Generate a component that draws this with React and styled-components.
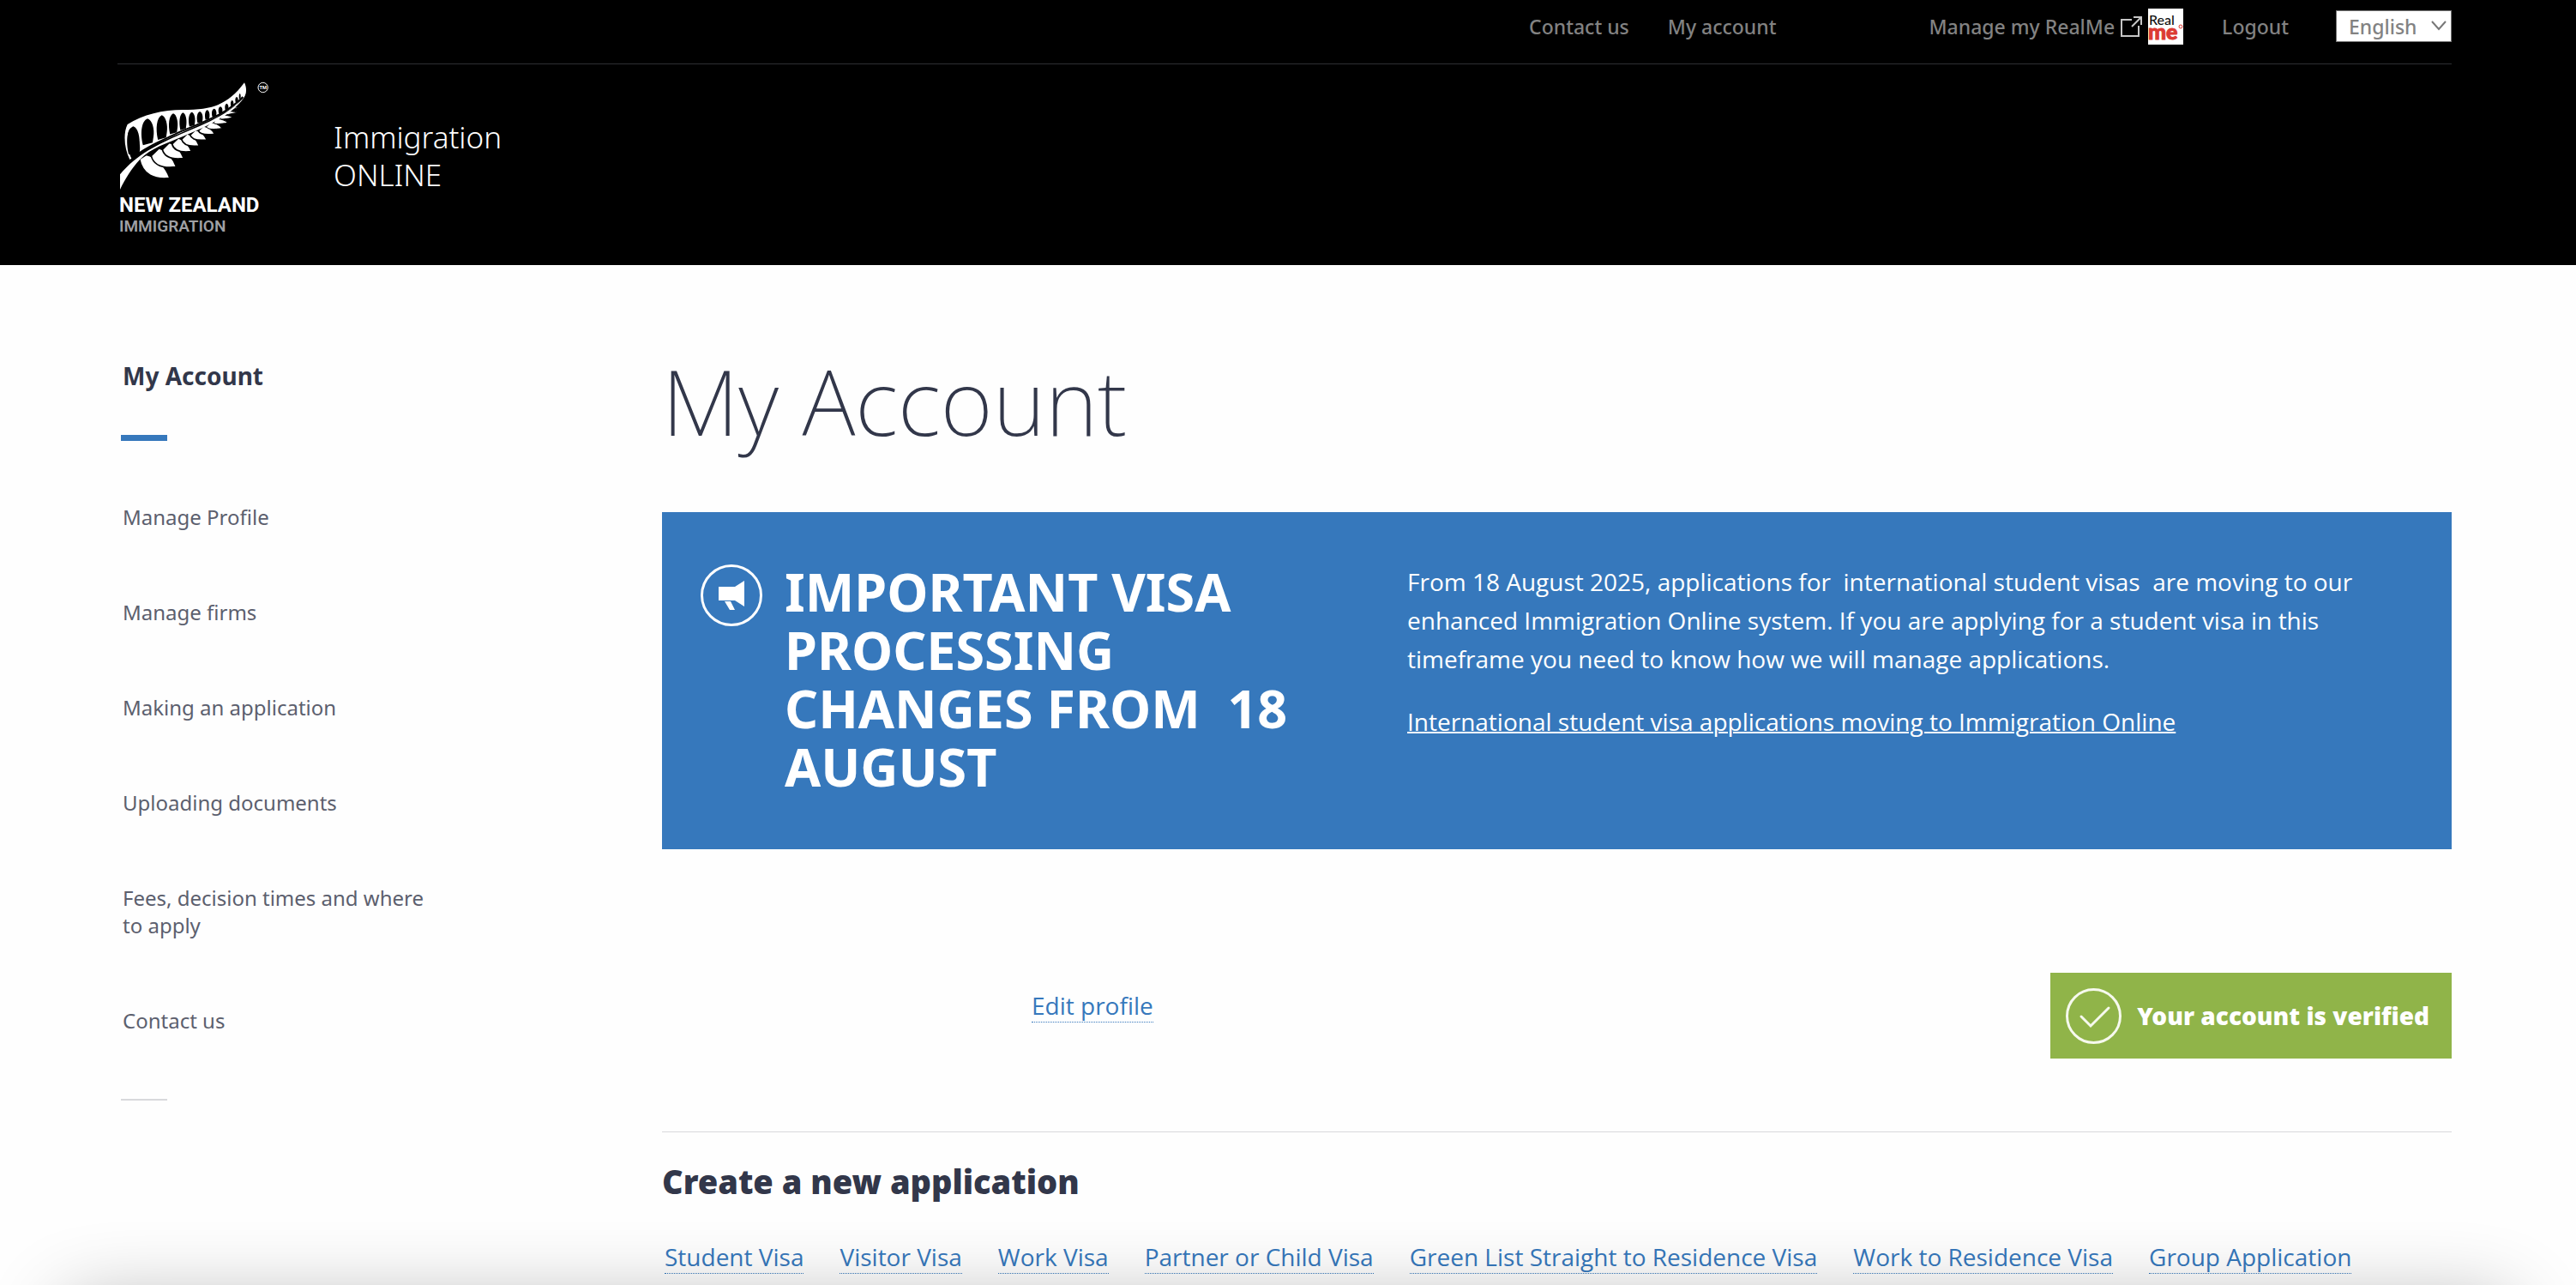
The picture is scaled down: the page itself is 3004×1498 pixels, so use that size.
import React from 'react';
import styled, { createGlobalStyle } from 'styled-components';

const sans = '"Noto Sans", "Open Sans", sans-serif';
const body = '"Open Sans", "Noto Sans", sans-serif';

const color = {
  ink: '#32374a',
  muted: '#5c606e',
  blue: '#3678bc',
  green: '#90b449',
  rule: '#d8d9dc',
  nav: '#828282',
};

const GlobalStyle = createGlobalStyle`
  *, *::before, *::after { box-sizing: border-box; }
  body {
    margin: 0;
    background: #fefefe;
    color: ${color.ink};
    font-family: ${body};
    overflow-x: hidden;
  }
  h1, h2, p, ul { margin: 0; padding: 0; }
  ul { list-style: none; }
`;

const Header = styled.header`
  background: #000;
  padding: 0 145px 32px 137px;
`;

const TopBar = styled.div`
  display: flex;
  justify-content: flex-end;
  align-items: center;
  height: 75px;
  padding-bottom: 13px;
  border-bottom: 1px solid #2e2f33;
`;

const NavGroup = styled.nav`
  display: flex;
  align-items: center;
  gap: 45px;
  margin-right: ${(p) => p.$after}px;
`;

const NavLink = styled.a`
  display: flex;
  align-items: center;
  font: 500 23px/30px ${sans};
  color: ${color.nav};
  text-decoration: none;
`;

const NavIcon = styled.svg`
  display: block;
  flex: none;
  margin-left: 6px;
`;

const LanguagePicker = styled.div`
  position: relative;
  width: 135px;
`;

const LanguageSelect = styled.select`
  appearance: none;
  display: block;
  width: 100%;
  height: 37px;
  padding: 0 0 0 14px;
  border: 1px solid #767676;
  border-radius: 0;
  background: #fff;
  color: ${color.nav};
  font: 500 23px/30px ${sans};
`;

const Chevron = styled.svg`
  position: absolute;
  right: 6px;
  top: 12px;
  pointer-events: none;
`;

const Brand = styled.div`
  display: flex;
  align-items: center;
  gap: 72px;
  padding-top: 12px;
`;

const HomeLink = styled.a`
  display: block;
  svg { display: block; }
`;

const BrandTitle = styled.p`
  font: 300 35px/44px ${sans};
  color: #fff;
`;

const Page = styled.div`
  display: grid;
  grid-template-columns: 370px minmax(0, 1fr);
  column-gap: 261px;
  padding: 99px 145px 12px 141px;
`;

const SideTitle = styled.h2`
  font: 700 28px/60px ${sans};
  padding-left: 2px;
`;

const Marker = styled.div`
  width: 54px;
  height: ${(p) => p.$height}px;
  background: ${(p) => p.$color};
  margin-top: ${(p) => p.$before}px;
`;

const SideList = styled.ul`
  display: flex;
  flex-direction: column;
  gap: 79px;
  margin-top: 73px;
  padding-left: 2px;
`;

const SideLink = styled.a`
  display: block;
  font: 400 24px/32px ${sans};
  color: ${color.muted};
  text-decoration: none;
`;

const Title = styled.h1`
  font: 200 105px/120px ${sans};
`;

const Notice = styled.section`
  display: grid;
  grid-template-columns: 72px minmax(0, 752fr) minmax(0, 1158fr);
  align-items: start;
  margin-top: 69px;
  padding: 59px 60px 62px 45px;
  background: ${color.blue};
  color: #fff;
`;

const NoticeIcon = styled.svg`
  display: block;
  margin-top: 2px;
`;

const NoticeTitle = styled.h2`
  margin: 0 60px 0 26px;
  font: 700 61px/68px ${sans};
  text-transform: uppercase;
`;

const NoticeText = styled.div`
  display: flex;
  flex-direction: column;
  align-items: flex-start;
  gap: 28px;
  font-size: 28px;
  line-height: 45px;
`;

const NoticeLink = styled.a`
  color: inherit;
  text-decoration-thickness: 2px;
`;

const ProfileRow = styled.div`
  display: flex;
  justify-content: space-between;
  align-items: flex-start;
  margin-top: 144px;
  padding: 0 0 85px 431px;
  border-bottom: 1px solid ${color.rule};
`;

const TextLink = styled.a`
  font-size: 28px;
  line-height: 38px;
  color: ${color.blue};
  text-decoration: none;
  white-space: nowrap;
  border-bottom: 1px dotted ${color.blue};
  margin-top: ${(p) => p.$before || 0}px;
`;

const Badge = styled.div`
  display: flex;
  align-items: center;
  gap: 18px;
  height: 100px;
  padding: 0 26px 0 18px;
  background: ${color.green};
  color: #fff;
  font: 900 28px/38px ${sans};
`;

const SectionTitle = styled.h2`
  margin: 32px 0 44px;
  font: 900 38px/50px ${sans};
`;

const VisaList = styled.ul`
  display: flex;
  flex-wrap: wrap;
  gap: 20px 42px;
  padding-left: 3px;
`;

const VisaItem = styled.li`
  display: flex;
`;

const BottomShade = styled.div`
  position: fixed;
  left: 76px;
  right: 76px;
  bottom: -220px;
  height: 200px;
  border-radius: 20px;
  box-shadow: 0 0 90px rgba(0, 0, 0, 0.3);
  pointer-events: none;
`;

const holes = [
  [76, 187, 21, 276], [126, 160, 21, 244], [176, 148, 18, 226], [216, 142, 15, 208],
  [250, 139, 12, 195], [281, 137, 11, 183], [309, 135, 10, 172], [335, 130, 8, 161],
  [359, 125, 8, 151], [381, 118, 7, 140], [403, 107, 6, 128], [422, 96, 5, 115],
  [438, 84, 5, 101], [449, 72, 3, 89],
];

const leaves = [
  [98, 302, 204, 368, 122, 286], [139, 290, 227, 329, 166, 264], [178, 268, 253, 299, 202, 244],
  [212, 249, 280, 275, 234, 228], [245, 232, 307, 255, 265, 213], [275, 217, 334, 234, 294, 199],
  [304, 202, 362, 214, 322, 186], [332, 188, 386, 194, 348, 173], [357, 174, 407, 175, 371, 160],
  [380, 160, 425, 157, 393, 147], [400, 146, 442, 139, 412, 134], [419, 131, 455, 119, 429, 120],
  [434, 117, 463, 103, 443, 106], [446, 103, 467, 88, 453, 93],
];

const holePath = ([x, t, w, b]) => {
  const h = b - t;
  return `M${x} ${t}C${x + w * 0.8} ${t + h * 0.05} ${x + w * 1.2} ${t + h * 0.45} ${x + w} ${t + h * 0.75}L${x + w * 0.85} ${b}L${x - w * 0.75} ${b + h * 0.1}C${x - w * 1.25} ${t + h * 0.6} ${x - w} ${t + h * 0.1} ${x} ${t}Z`;
};

const leafPath = ([ax, ay, tx, ty, bx, by]) => {
  const dx = tx - ax;
  const dy = ty - ay;
  return `M${ax} ${ay}C${ax + dx * 0.1} ${ay + dy * 0.6 + dx * 0.14} ${ax + dx * 0.5} ${ty + dx * 0.06} ${tx} ${ty}C${tx - dx * 0.12} ${ty - (ty - by) * 0.45} ${bx + (tx - bx) * 0.45} ${by + (ty - by) * 0.1} ${bx} ${by}Z`;
};

function FernLogo() {
  return (
    <svg width="180" height="190" viewBox="137 87 180 190" role="img" aria-label="New Zealand Immigration">
      <g transform="translate(130 85) scale(.33333)">
        <path
          fill="#fff"
          d="M64 303C45 265 40 212 56 180C110 145 180 129 250 129C350 128 405 115 465 34C476 58 472 82 456 94C430 120 390 142 350 162L160 246L98 278C104 250 92 215 78 190C66 190 55 200 56 235C57 262 62 285 70 299Z"
        />
        {holes.map((h) => <path key={h[0]} d={holePath(h)} fill="#000" />)}
        <path d="M74 298C120 258 180 236 240 206C320 172 400 146 460 84" fill="none" stroke="#000" strokeWidth="6" />
        {leaves.map((l) => (
          <path key={l[0]} d={leafPath(l)} fill="#fff" stroke="#000" strokeWidth={l[2] < 370 ? 5 : 3} />
        ))}
        <path
          fill="#fff"
          d="M30 408V355C90 282 165 250 240 215C320 181 400 152 464 86C410 158 330 186 250 222C190 248 140 262 100 302C70 334 48 370 30 408Z"
        />
        <circle cx="530" cy="51" r="17" fill="none" stroke="#fff" strokeWidth="3" />
        <text x="530" y="57" textAnchor="middle" fill="#fff" fontFamily="Roboto, sans-serif" fontSize="17" fontWeight="700">TM</text>
      </g>
      <text x="139" y="247" fill="#fff" fontFamily="Roboto, sans-serif" fontSize="24" fontWeight="700">NEW ZEALAND</text>
      <text x="139" y="270" fill="#9fa0a4" fontFamily="Roboto, sans-serif" fontSize="19" fontWeight="600">IMMIGRATION</text>
    </svg>
  );
}

function ExternalIcon() {
  return (
    <NavIcon width="27" height="26" viewBox="0 0 27 26" fill="none" stroke="#c6c6c6" strokeWidth="2" aria-hidden="true">
      <path d="M14 5H2v19h20V12M14 13L25 2M16 2h9v9" />
    </NavIcon>
  );
}

function RealMeLogo() {
  return (
    <NavIcon width="41" height="42" viewBox="0 0 41 42" role="img" aria-label="RealMe">
      <rect width="41" height="42" fill="#fff" />
      <text x="1" y="19" fill="#111" fontFamily="'Liberation Sans Narrow', Lato, sans-serif" fontSize="16">Real</text>
      <text x="0" y="36" fill="#dc3a33" stroke="#dc3a33" strokeWidth="1" fontFamily="Lato, sans-serif" fontSize="25" fontWeight="900">me</text>
      <circle cx="38" cy="21" r="2" fill="none" stroke="#dc3a33" />
    </NavIcon>
  );
}

function Megaphone() {
  return (
    <NoticeIcon width="72" height="72" viewBox="0 0 72 72" aria-hidden="true">
      <circle cx="36" cy="36" r="34.5" fill="none" stroke="#fff" strokeWidth="3" />
      <path fill="#fff" d="M21 26h19l11-7v30l-11-7H21zM28 43h7l5 10h-6z" />
    </NoticeIcon>
  );
}

function VerifiedIcon() {
  return (
    <svg width="65" height="65" viewBox="0 0 65 65" fill="none" stroke="#f6f9ee" strokeWidth="3" aria-hidden="true">
      <circle cx="32.5" cy="32.5" r="31" />
      <path d="M18 33l11 11 21-21" strokeWidth="3" strokeLinecap="round" />
    </svg>
  );
}

const noticeTitle = 'Important visa processing changes from \u00a018 August';

const noticeText =
  'From 18 August 2025, applications for \u00a0international student visas \u00a0are moving to our ' +
  'enhanced Immigration Online system. If you are applying for a student visa in this timeframe ' +
  'you need to know how we will manage applications.';

const sideLinks = [
  'Manage Profile',
  'Manage firms',
  'Making an application',
  'Uploading documents',
  'Fees, decision times and where to apply',
  'Contact us',
];

const visas = [
  'Student Visa',
  'Visitor Visa',
  'Work Visa',
  'Partner or Child Visa',
  'Green List Straight to Residence Visa',
  'Work to Residence Visa',
  'Group Application',
];

export default function App() {
  return (
    <>
      <GlobalStyle />
      <Header>
        <TopBar>
          <NavGroup $after={178} aria-label="Site">
            <NavLink href="#contact">Contact us</NavLink>
            <NavLink href="#account">My account</NavLink>
          </NavGroup>
          <NavGroup $after={55} aria-label="Session">
            <NavLink href="#realme">
              Manage my RealMe
              <ExternalIcon />
              <RealMeLogo />
            </NavLink>
            <NavLink href="#logout">Logout</NavLink>
          </NavGroup>
          <LanguagePicker>
            <LanguageSelect aria-label="Language" defaultValue="English">
              <option>English</option>
            </LanguageSelect>
            <Chevron width="18" height="12" viewBox="0 0 18 12" fill="none" stroke="#777" strokeWidth="2" aria-hidden="true">
              <path d="M1 1l8 9 8-9" />
            </Chevron>
          </LanguagePicker>
        </TopBar>
        <Brand>
          <HomeLink href="#home"><FernLogo /></HomeLink>
          <BrandTitle>Immigration<br />ONLINE</BrandTitle>
        </Brand>
      </Header>

      <Page>
        <aside>
          <SideTitle>My Account</SideTitle>
          <Marker $height={7} $before={39} $color={color.blue} />
          <nav aria-label="My Account">
            <SideList>
              {sideLinks.map((label) => (
                <li key={label}><SideLink href="#section">{label}</SideLink></li>
              ))}
            </SideList>
          </nav>
          <Marker $height={2} $before={75} $color={color.rule} />
        </aside>

        <main>
          <Title>My Account</Title>
          <Notice>
            <Megaphone />
            <NoticeTitle>{noticeTitle}</NoticeTitle>
            <NoticeText>
              <p>{noticeText}</p>
              <NoticeLink href="#student-visas">
                International student visa applications moving to Immigration Online
              </NoticeLink>
            </NoticeText>
          </Notice>

          <ProfileRow>
            <TextLink href="#edit" $before={19}>Edit profile</TextLink>
            <Badge>
              <VerifiedIcon />
              Your account is verified
            </Badge>
          </ProfileRow>

          <SectionTitle>Create a new application</SectionTitle>
          <VisaList>
            {visas.map((label) => (
              <VisaItem key={label}><TextLink href="#apply">{label}</TextLink></VisaItem>
            ))}
          </VisaList>
        </main>
      </Page>
      <BottomShade />
    </>
  );
}
